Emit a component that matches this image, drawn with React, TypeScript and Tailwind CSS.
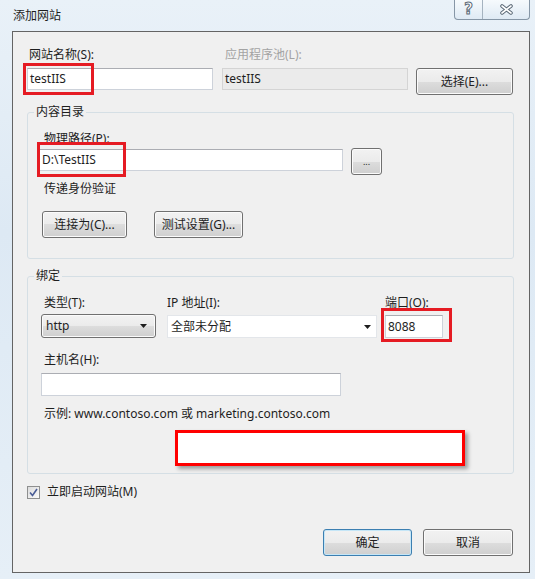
const btnBase =
  "flex items-center rounded-[3px] border bg-[linear-gradient(#f2f2f2_0%,#ebebeb_50%,#dddddd_50%,#cfcfcf_100%)] text-[#1e1e1e]";
const btn = btnBase + " justify-center h-[27px] border-[#707070] shadow-[inset_0_0_0_1px_#fbfbfb]";
const input =
  "flex items-center bg-white border border-[#cdd2da] border-t-[#abadb3] pl-[2px] text-[#1e1e1e]";
const label = "leading-[16px] text-[#1e1e1e]";

function RedMark({ className }: { className: string }) {
  return <span className={"absolute border-[3px] border-[#e51b23] pointer-events-none " + className} />;
}

function Arrow() {
  return (
    <svg width="7" height="4" viewBox="0 0 7 4" className="shrink-0">
      <polygon points="0,0 7,0 3.5,4" fill="#1e1e1e" />
    </svg>
  );
}

export default function App() {
  return (
    <div className="w-[535px] h-[579px] bg-[linear-gradient(180deg,#e9f1f8_0%,#dde9f4_40%,#e6eff7_100%)] font-['Noto_Sans','Noto_Sans_CJK_SC',sans-serif] text-[12px] text-[#1e1e1e] overflow-hidden">
      {/* title bar */}
      <div className="h-[31px] flex">
        <div className="pl-[13px] pt-[8px] leading-[16px]">添加网站</div>
        <div className="ml-auto mr-[5px] flex h-[20px] border border-t-0 border-[#8696a6] rounded-b-[4px] bg-[linear-gradient(#f6fafd,#dfeaf4)] overflow-hidden">
          <div className="w-[28px] flex items-center justify-center border-r border-[#a5b3c0] text-[15px] font-bold leading-none text-white [-webkit-text-stroke:1px_#5d6b78] font-['DejaVu_Sans',sans-serif]">
            ?
          </div>
          <div className="w-[46px] flex items-center justify-center">
            <svg width="15" height="11" viewBox="0 0 15 11">
              <path d="M3 2 L12 9 M12 2 L3 9" stroke="#5d6b78" strokeWidth="3.6" strokeLinecap="round" />
              <path d="M3 2 L12 9 M12 2 L3 9" stroke="#ffffff" strokeWidth="1.6" strokeLinecap="round" />
            </svg>
          </div>
        </div>
      </div>

      {/* client */}
      <div className="ml-[12px] mr-[5px] h-[542px] flex flex-col border border-[#646464] bg-[#f0f0f0]">
        {/* site name row */}
        <div className="flex pl-[14px] pt-[15px]">
          <div className="w-[186px]">
            <div className={label + " pl-[2px]"}>网站名称(S):</div>
            <div className="relative mt-[5px]">
              <div className={input + " h-[22px]"}>testIIS</div>
              <RedMark className="-left-[4px] -top-[5px] w-[71px] h-[32px]" />
            </div>
          </div>
          <div className="w-[186px] ml-[9px]">
            <div className="leading-[16px] pl-[3px] text-[#a3a3a3]">应用程序池(L):</div>
            <div className="mt-[5px] h-[22px] flex items-center pl-[2px] bg-[#ebebeb] border border-[#d4d4d4]">testIIS</div>
          </div>
          <div className="w-[97px] ml-[8px] pt-[21px]">
            <div className={btn}>选择(E)...</div>
          </div>
        </div>

        {/* content directory */}
        <fieldset className="ml-[14px] w-[487px] mt-[9px] border border-[#d5dfe5] rounded-[3px] pl-[6px] pb-[20px]">
          <legend className="px-[2px] leading-[16px]">内容目录</legend>
          <div className={label + " ml-[10px] mt-[11px]"}>物理路径(P):</div>
          <div className="flex items-start ml-[5px] mt-[1px]">
            <div className="relative mt-[1px]">
              <div className={input + " w-[304px] h-[22px]"}>D:\TestIIS</div>
              <RedMark className="-left-[2px] -top-[7px] w-[89px] h-[35px]" />
            </div>
            <div className={btn + " ml-[8px] w-[31px] text-[9px]"}>...</div>
          </div>
          <div className={label + " ml-[10px] mt-[6px]"}>传递身份验证</div>
          <div className="flex gap-[27px] ml-[8px] mt-[14px]">
            <div className={btn + " w-[85px]"}>连接为(C)...</div>
            <div className={btn + " w-[89px]"}>测试设置(G)...</div>
          </div>
        </fieldset>

        {/* binding */}
        <fieldset className="ml-[14px] w-[487px] mt-[9px] border border-[#d5dfe5] rounded-[3px] pl-[6px] pb-[7px]">
          <legend className="px-[2px] leading-[16px]">绑定</legend>
          <div className="flex mt-[11px] ml-[7px]">
            <div className="w-[115px]">
              <div className={label + " pl-[3px]"}>类型(T):</div>
              <div className={btnBase + " mt-[3px] h-[24px] justify-between pl-[4px] pr-[8px] border-[#707070] shadow-[inset_0_0_0_1px_#fbfbfb]"}>
                <span>http</span>
                <Arrow />
              </div>
            </div>
            <div className="w-[210px] ml-[11px]">
              <div className={label}>IP 地址(I):</div>
              <div className="mt-[4px] h-[23px] flex items-center justify-between pl-[3px] pr-[5px] bg-white border border-[#e3e6ea]">
                <span>全部未分配</span>
                <Arrow />
              </div>
            </div>
            <div className="w-[58px] ml-[8px]">
              <div className={label}>端口(O):</div>
              <div className="relative mt-[4px]">
                <div className={input + " h-[23px]"}>8088</div>
                <RedMark className="-left-[4px] -top-[7px] w-[71px] h-[34px]" />
              </div>
            </div>
          </div>
          <div className={label + " ml-[10px] mt-[14px]"}>主机名(H):</div>
          <div className={input + " ml-[7px] mt-[5px] w-[300px] h-[23px]"} />
          <div className={label + " ml-[10px] mt-[10px]"}>示例: www.contoso.com 或 marketing.contoso.com</div>
          <div className="ml-[141px] mt-[8px] w-[290px] h-[36px] bg-white border-[3px] border-[#ff0000] shadow-[3px_3px_4px_rgba(0,0,0,0.35)]" />
        </fieldset>

        {/* start immediately */}
        <div className="flex items-center ml-[14px] mt-[10px]">
          <div className="w-[13px] h-[13px] border border-[#8e8f8f] bg-[linear-gradient(135deg,#dcdcdc,#fbfbfb)] flex items-center justify-center">
            <svg width="9" height="9" viewBox="0 0 9 9">
              <path d="M1 4.5 L3.5 7.5 L8 1" stroke="#4a5d96" strokeWidth="1.6" fill="none" />
            </svg>
          </div>
          <span className="ml-[7px] leading-[16px]">立即启动网站(M)</span>
        </div>

        {/* dialog buttons */}
        <div className="mt-auto flex justify-end gap-[11px] pr-[16px] pb-[16px]">
          <div className={btnBase + " justify-center h-[27px] w-[89px] border-[#3c7fb1] shadow-[inset_0_0_0_1px_#c5e6f7]"}>确定</div>
          <div className={btn + " w-[90px]"}>取消</div>
        </div>
      </div>
    </div>
  );
}
